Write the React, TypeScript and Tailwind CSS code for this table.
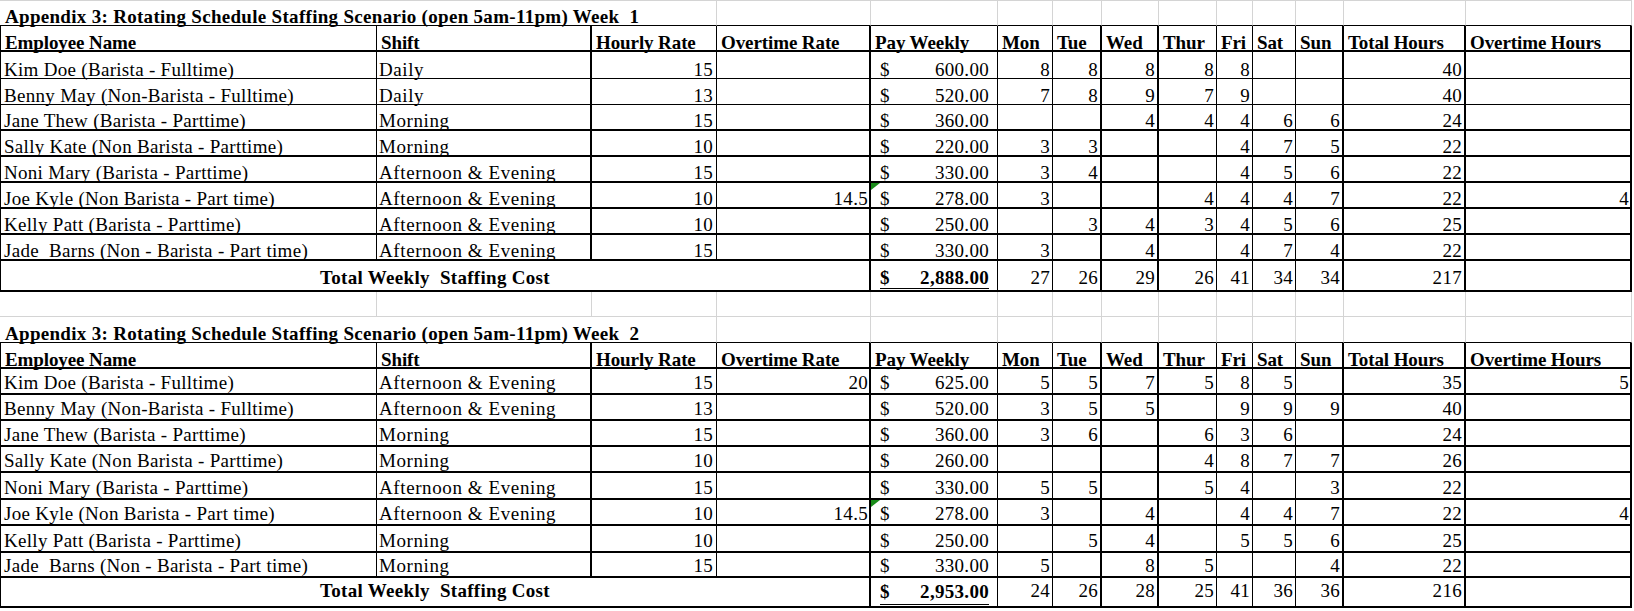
import React from 'react';

type Emp = {
  name: string;
  shift: string;
  rate: number;
  ot?: number;
  pay: string;
  days: (number | null)[];
  total: number;
  otHours?: number;
  flag?: boolean;
};

type Week = {
  title: string;
  titleTop: boolean;
  rows: Emp[];
  rowH: string[];
  rowB: string[];
  rowPb: string;
  totalH: string;
  totalPb: string;
  payPb: string;
  ulPb: string;
  totalPay: string;
  totalDays: number[];
  totalHours: number;
};

const GRID =
  'grid grid-cols-[377px_215px_125px_154px_127px_55px_49px_57px_58px_36px_43px_48px_122px_166px]';
// right border weight per column, as drawn in the sheet
const RB = [
  'border-r',
  'border-r-2',
  'border-r',
  'border-r-2',
  'border-r',
  'border-r',
  'border-r-2',
  'border-r-2',
  'border-r',
  'border-r',
  'border-r',
  'border-r-2',
  'border-r-2',
  'border-r-2',
];
const DAYS = ['Mon', 'Tue', 'Wed', 'Thur', 'Fri', 'Sat', 'Sun'];
const CELL = 'flex items-end leading-[17px] whitespace-pre border-black';

const week1: Week = {
  title: 'Appendix 3: Rotating Schedule Staffing Scenario (open 5am-11pm) Week  1',
  titleTop: true,
  rows: [
    { name: 'Kim Doe (Barista - Fulltime)', shift: 'Daily', rate: 15, pay: '600.00', days: [8, 8, 8, 8, 8, null, null], total: 40 },
    { name: 'Benny May (Non-Barista - Fulltime)', shift: 'Daily', rate: 13, pay: '520.00', days: [7, 8, 9, 7, 9, null, null], total: 40 },
    { name: 'Jane Thew (Barista - Parttime)', shift: 'Morning', rate: 15, pay: '360.00', days: [null, null, 4, 4, 4, 6, 6], total: 24 },
    { name: 'Sally Kate (Non Barista - Parttime)', shift: 'Morning', rate: 10, pay: '220.00', days: [3, 3, null, null, 4, 7, 5], total: 22 },
    { name: 'Noni Mary (Barista - Parttime)', shift: 'Afternoon & Evening', rate: 15, pay: '330.00', days: [3, 4, null, null, 4, 5, 6], total: 22 },
    { name: 'Joe Kyle (Non Barista - Part time)', shift: 'Afternoon & Evening', rate: 10, ot: 14.5, pay: '278.00', days: [3, null, null, 4, 4, 4, 7], total: 22, otHours: 4, flag: true },
    { name: 'Kelly Patt (Barista - Parttime)', shift: 'Afternoon & Evening', rate: 10, pay: '250.00', days: [null, 3, 4, 3, 4, 5, 6], total: 25 },
    { name: 'Jade  Barns (Non - Barista - Part time)', shift: 'Afternoon & Evening', rate: 15, pay: '330.00', days: [3, null, 4, null, 4, 7, 4], total: 22 },
  ],
  rowH: ['h-[27px]', 'h-[26px]', 'h-[26px]', 'h-[26px]', 'h-[26px]', 'h-[26px]', 'h-[26px]', 'h-[26px]'],
  rowB: ['border-b', 'border-b', 'border-b-2', 'border-b-2', 'border-b-2', 'border-b-2', 'border-b-2', 'border-b-2'],
  rowPb: 'pb-0',
  totalH: 'h-[31px]',
  totalPb: 'pb-[4px]',
  payPb: 'pb-[1px]',
  ulPb: 'pb-[2px]',
  totalPay: '2,888.00',
  totalDays: [27, 26, 29, 26, 41, 34, 34],
  totalHours: 217,
};

const week2: Week = {
  title: 'Appendix 3: Rotating Schedule Staffing Scenario (open 5am-11pm) Week  2',
  titleTop: false,
  rows: [
    { name: 'Kim Doe (Barista - Fulltime)', shift: 'Afternoon & Evening', rate: 15, ot: 20, pay: '625.00', days: [5, 5, 7, 5, 8, 5, null], total: 35, otHours: 5 },
    { name: 'Benny May (Non-Barista - Fulltime)', shift: 'Afternoon & Evening', rate: 13, pay: '520.00', days: [3, 5, 5, null, 9, 9, 9], total: 40 },
    { name: 'Jane Thew (Barista - Parttime)', shift: 'Morning', rate: 15, pay: '360.00', days: [3, 6, null, 6, 3, 6, null], total: 24 },
    { name: 'Sally Kate (Non Barista - Parttime)', shift: 'Morning', rate: 10, pay: '260.00', days: [null, null, null, 4, 8, 7, 7], total: 26 },
    { name: 'Noni Mary (Barista - Parttime)', shift: 'Afternoon & Evening', rate: 15, pay: '330.00', days: [5, 5, null, 5, 4, null, 3], total: 22 },
    { name: 'Joe Kyle (Non Barista - Part time)', shift: 'Afternoon & Evening', rate: 10, ot: 14.5, pay: '278.00', days: [3, null, 4, null, 4, 4, 7], total: 22, otHours: 4, flag: true },
    { name: 'Kelly Patt (Barista - Parttime)', shift: 'Morning', rate: 10, pay: '250.00', days: [null, 5, 4, null, 5, 5, 6], total: 25 },
    { name: 'Jade  Barns (Non - Barista - Part time)', shift: 'Morning', rate: 15, pay: '330.00', days: [5, null, 8, 5, null, null, 4], total: 22 },
  ],
  rowH: ['h-[26px]', 'h-[26px]', 'h-[26px]', 'h-[26px]', 'h-[27px]', 'h-[26px]', 'h-[27px]', 'h-[25px]'],
  rowB: ['border-b-2', 'border-b-2', 'border-b-2', 'border-b-2', 'border-b-2', 'border-b-2', 'border-b-2', 'border-b-2'],
  rowPb: 'pb-[2px]',
  totalH: 'h-[30px]',
  totalPb: 'pb-[7px]',
  payPb: 'pb-[1px]',
  ulPb: 'pb-[4px]',
  totalPay: '2,953.00',
  totalDays: [24, 26, 28, 25, 41, 36, 36],
  totalHours: 216,
};

const BlankRow: React.FC = () => (
  <div className={`${GRID} h-[25px]`}>
    {RB.map((_, i) => (
      <div key={i} className="border-r border-b border-[#d4d4d4]" />
    ))}
  </div>
);

const Sheet: React.FC<{ w: Week }> = ({ w }) => (
  <>
    {/* Title row */}
    <div className={`${GRID} h-[26px]`}>
      <div
        className={`col-span-3 ${CELL} pl-[5px] font-bold border-b border-b-black border-r border-r-[#d4d4d4] ${
          w.titleTop ? 'border-t border-t-[#d4d4d4]' : ''
        }`}
      >
        {w.title}
      </div>
      {RB.slice(3).map((_, i) => (
        <div
          key={i}
          className={`border-b border-b-black border-r border-r-[#d4d4d4] ${w.titleTop ? 'border-t border-t-[#d4d4d4]' : ''}`}
        />
      ))}
    </div>

    {/* Header row */}
    <div className={`${GRID} h-[26px] font-bold tracking-[-0.1px]`}>
      {['Employee Name', 'Shift', 'Hourly Rate', 'Overtime Rate', 'Pay Weekly', ...DAYS, 'Total Hours', 'Overtime Hours'].map(
        (h, i) => (
          <div
            key={h}
            className={`flex items-end leading-[14px] whitespace-pre border-black border-b-2 pl-[4px] ${RB[i]} ${
              i === 0 ? 'border-l' : ''
            }`}
          >
            {h}
          </div>
        )
      )}
    </div>

    {/* Employees */}
    {w.rows.map((e, r) => {
      const b = `${w.rowB[r]} ${w.rowPb}`;
      return (
        <div key={r} className={`${GRID} ${w.rowH[r]}`}>
          <div className={`${CELL} ${b} ${RB[0]} border-l pl-[3px]`}>{e.name}</div>
          <div className={`${CELL} ${b} ${RB[1]} pl-[2px] tracking-[0.6px]`}>{e.shift}</div>
          <div className={`${CELL} ${b} ${RB[2]} justify-end pr-[3px]`}>{e.rate}</div>
          <div className={`${CELL} ${b} ${RB[3]} justify-end pr-[1px]`}>{e.ot ?? ''}</div>
          <div className={`${CELL} ${b} ${RB[4]} relative justify-between pl-[9px] pr-[8px]`}>
            {e.flag && (
              <svg className="absolute left-0 top-0" width="9" height="7" viewBox="0 0 9 7">
                <polygon points="0,0 9,0 0,7" fill="#1a8c1a" />
              </svg>
            )}
            <span>$</span>
            <span>{e.pay}</span>
          </div>
          {e.days.map((d, i) => (
            <div key={i} className={`${CELL} ${b} ${RB[5 + i]} justify-end pr-[2px]`}>
              {d ?? ''}
            </div>
          ))}
          <div className={`${CELL} ${b} ${RB[12]} justify-end pr-[2px]`}>{e.total}</div>
          <div className={`${CELL} ${b} ${RB[13]} justify-end pr-[1px]`}>{e.otHours ?? ''}</div>
        </div>
      );
    })}

    {/* Total row */}
    <div className={`${GRID} ${w.totalH}`}>
      <div className={`col-span-4 ${CELL} justify-center font-bold border-l border-r-2 border-b-2 ${w.totalPb}`}>
        Total Weekly  Staffing Cost
      </div>
      <div className={`${CELL} font-bold border-r border-b-2 pl-[9px] pr-[8px] ${w.payPb}`}>
        <div className={`flex flex-1 justify-between border-b border-black ${w.ulPb}`}>
          <span>$</span>
          <span>{w.totalPay}</span>
        </div>
      </div>
      {w.totalDays.map((d, i) => (
        <div key={i} className={`${CELL} border-b-2 ${RB[5 + i]} justify-end pr-[2px] ${w.totalPb}`}>
          {d}
        </div>
      ))}
      <div className={`${CELL} border-b-2 ${RB[12]} justify-end pr-[2px] ${w.totalPb}`}>{w.totalHours}</div>
      <div className={`${CELL} border-b-2 ${RB[13]}`} />
    </div>
  </>
);

const App: React.FC = () => {
  return (
    <div className="min-h-screen w-full bg-white text-black font-['Liberation_Serif','Times_New_Roman',serif] text-[19px] tracking-[0.3px]">
      <Sheet w={week1} />
      <BlankRow />
      <Sheet w={week2} />
    </div>
  );
};

export default App;
